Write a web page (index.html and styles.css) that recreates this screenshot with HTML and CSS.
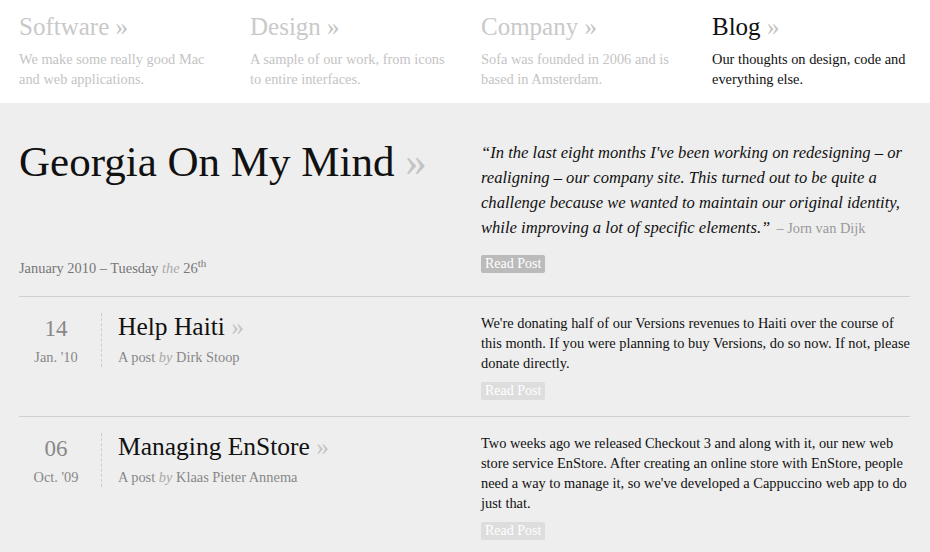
FILE: index.html
```html
<!DOCTYPE html>
<html>
<head>
<meta charset="utf-8">
<link rel="stylesheet" href="styles.css">
</head>
<body>
<nav class="topnav">
  <div class="nav-item">
    <h2 class="nav-title">Software <span class="raquo">»</span></h2>
    <p class="nav-desc">We make some really good Mac and web applications.</p>
  </div>
  <div class="nav-item">
    <h2 class="nav-title">Design <span class="raquo">»</span></h2>
    <p class="nav-desc">A sample of our work, from icons to entire interfaces.</p>
  </div>
  <div class="nav-item">
    <h2 class="nav-title">Company <span class="raquo">»</span></h2>
    <p class="nav-desc">Sofa was founded in 2006 and is based in Amsterdam.</p>
  </div>
  <div class="nav-item active">
    <h2 class="nav-title">Blog <span class="raquo">»</span></h2>
    <p class="nav-desc">Our thoughts on design, code and everything else.</p>
  </div>
</nav>
<main class="content">
  <section class="feature">
    <div class="feature-left">
      <h1 class="feature-title">Georgia On My Mind <span class="raquo">»</span></h1>
      <p class="feature-date">January 2010 – Tuesday <em>the</em> 26<sup>th</sup></p>
    </div>
    <div class="feature-right">
      <blockquote class="quote">“In the last eight months I've been working on redesigning – or realigning – our company site. This turned out to be quite a challenge because we wanted to maintain our original identity, while improving a lot of specific elements.” <cite>– Jorn van Dijk</cite></blockquote>
      <a class="btn btn-dark">Read Post</a>
    </div>
  </section>
  <article class="post">
    <div class="post-left">
      <div class="post-date"><span class="day">14</span><span class="month">Jan. '10</span></div>
      <div class="post-head">
        <h3 class="post-title">Help Haiti <span class="raquo">»</span></h3>
        <p class="byline">A post <em>by</em> Dirk Stoop</p>
      </div>
    </div>
    <div class="post-right">
      <p class="excerpt">We're donating half of our Versions revenues to Haiti over the course of this month. If you were planning to buy Versions, do so now. If not, please donate directly.</p>
      <a class="btn btn-light">Read Post</a>
    </div>
  </article>
  <article class="post last">
    <div class="post-left">
      <div class="post-date"><span class="day">06</span><span class="month">Oct. '09</span></div>
      <div class="post-head">
        <h3 class="post-title">Managing EnStore <span class="raquo">»</span></h3>
        <p class="byline">A post <em>by</em> Klaas Pieter Annema</p>
      </div>
    </div>
    <div class="post-right">
      <p class="excerpt">Two weeks ago we released Checkout 3 and along with it, our new web store service EnStore. After creating an online store with EnStore, people need a way to manage it, so we've developed a Cappuccino web app to do just that.</p>
      <a class="btn btn-light">Read Post</a>
    </div>
  </article>
</main>
</body>
</html>
```
FILE: styles.css
```css
* { box-sizing: border-box; }
html, body { margin: 0; padding: 0; }
body {
  font-family: "Liberation Serif", "DejaVu Serif", serif;
  background: #eeeeee;
  color: #111;
  width: 930px;
  height: 552px;
  overflow: hidden;
}
p, h1, h2, h3, blockquote { margin: 0; font-weight: normal; }

.topnav {
  background: #fff;
  height: 103px;
  padding: 12px 20px 0 19px;
  display: grid;
  grid-template-columns: repeat(4, 212px);
  column-gap: 19px;
}
.nav-title {
  font-size: 25px;
  line-height: 30px;
  color: #c9c9c9;
}
.nav-desc {
  max-width: 200px;
  margin-top: 7px;
  font-size: 14.4px;
  line-height: 20px;
  color: #c4c4c4;
}
.active .nav-title { color: #111; }
.active .nav-desc { color: #111; }
.raquo { color: #c4c4c4; }

.content { padding: 0 20px 0 19px; }

.feature {
  display: grid;
  grid-template-columns: 443px 1fr;
  column-gap: 19px;
  padding: 37px 0 23px;
  border-bottom: 1px solid #cfcfcf;
}
.feature-left {
  display: flex;
  flex-direction: column;
  justify-content: space-between;
}
.feature-title {
  font-size: 43px;
  line-height: 48px;
  margin-top: -2px;
  color: #111;
}
.feature-date {
  font-size: 14.4px;
  line-height: 20px;
  color: #777;
  margin-bottom: -5px;
}
.feature-date em { color: #aaa; }
.feature-date sup { font-size: 11px; line-height: 0; vertical-align: 6px; }

.quote {
  font-style: italic;
  font-size: 16.6px;
  line-height: 25px;
  color: #111;
}
.quote cite {
  margin-left: 2px;
  font-style: normal;
  font-size: 14.4px;
  color: #999;
}
.btn {
  display: inline-block;
  margin-top: 14px;
  padding: 0 4px;
  font-size: 14px;
  line-height: 18px;
  color: #fff;
  border-radius: 2px;
}
.btn-dark { background: #bbbbbb; }
.btn-light { background: #dddddd; }

.post {
  display: grid;
  grid-template-columns: 443px 1fr;
  column-gap: 19px;
  padding: 16px 0 16px;
  border-bottom: 1px solid #cfcfcf;
}
.post.last { border-bottom: 0; }
.post-left { display: flex; align-items: flex-start; }
.post-date {
  width: 83px;
  padding-right: 8px;
  border-right: 1px dashed #ccc;
  display: flex;
  flex-direction: column;
  align-items: center;
  height: 54px;
  padding-top: 3px;
}
.day {
  font-size: 23px;
  line-height: 26px;
  color: #888;
}
.month {
  margin-top: 5px;
  font-size: 14.4px;
  line-height: 20px;
  color: #888;
}
.post-head { padding-left: 16px; }
.post-title {
  font-size: 25.5px;
  line-height: 28px;
  color: #111;
}
.byline {
  margin-top: 6px;
  font-size: 14.4px;
  line-height: 20px;
  color: #888;
}
.byline em { color: #aaa; }
.excerpt {
  font-size: 14.4px;
  line-height: 20px;
  color: #111;
}
.post .btn { margin-top: 9px; }
```
